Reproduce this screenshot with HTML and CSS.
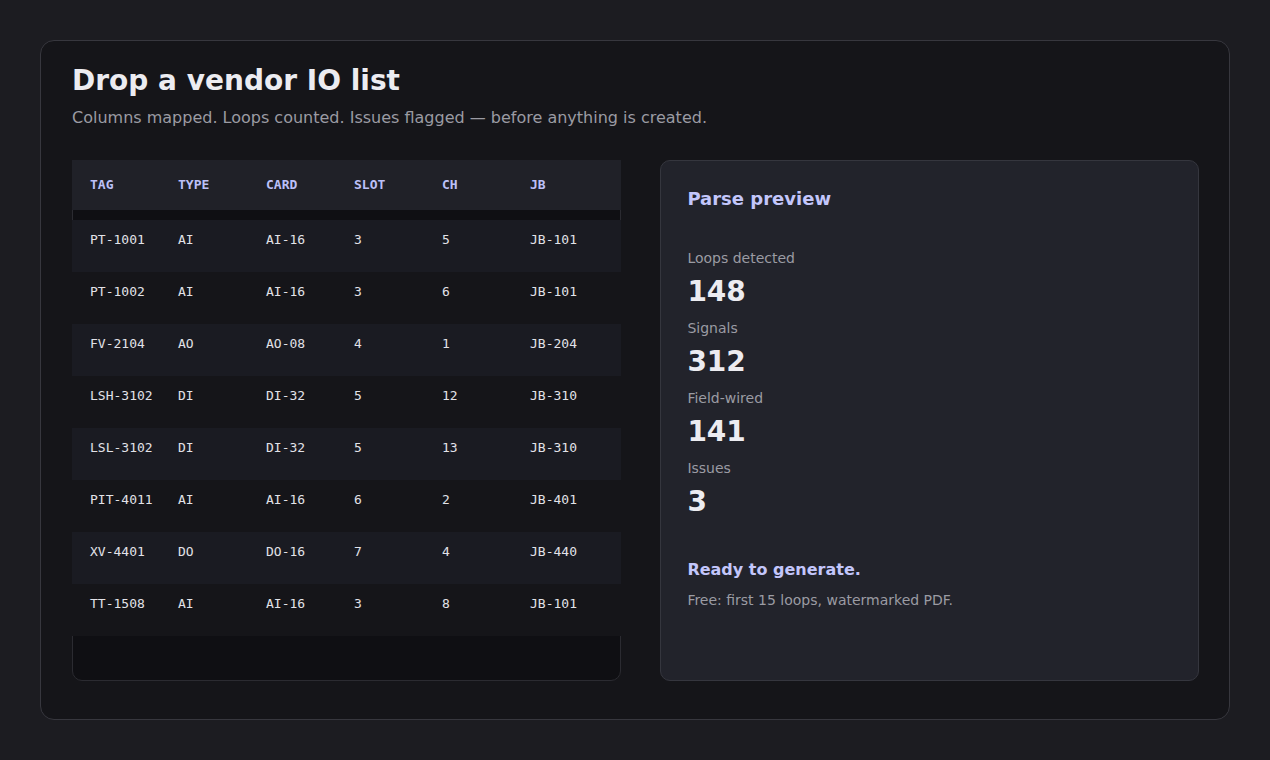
FILE: index.html
```html
<!DOCTYPE html>
<html lang="en">
<head>
  <meta charset="UTF-8" />
  <meta name="viewport" content="width=device-width, initial-scale=1.0"/>
  <title>Loop Sheets | Import</title>
  <link rel="stylesheet" href="styles.css">
</head>
<body>
  <section class="card">
    <h1>Drop a vendor IO list</h1>
    <p class="lead">Columns mapped. Loops counted. Issues flagged — before anything is created.</p>

    <div class="split">
      <div class="table-panel">
        <table class="io-table">
          <colgroup>
            <col class="c"><col class="c"><col class="c"><col class="c"><col class="c"><col>
          </colgroup>
          <thead>
            <tr><th>Tag</th><th>Type</th><th>Card</th><th>Slot</th><th>Ch</th><th>JB</th></tr>
          </thead>
          <tbody>
            <tr><td>PT-1001</td><td>AI</td><td>AI-16</td><td>3</td><td>5</td><td>JB-101</td></tr>
            <tr><td>PT-1002</td><td>AI</td><td>AI-16</td><td>3</td><td>6</td><td>JB-101</td></tr>
            <tr><td>FV-2104</td><td>AO</td><td>AO-08</td><td>4</td><td>1</td><td>JB-204</td></tr>
            <tr><td>LSH-3102</td><td>DI</td><td>DI-32</td><td>5</td><td>12</td><td>JB-310</td></tr>
            <tr><td>LSL-3102</td><td>DI</td><td>DI-32</td><td>5</td><td>13</td><td>JB-310</td></tr>
            <tr><td>PIT-4011</td><td>AI</td><td>AI-16</td><td>6</td><td>2</td><td>JB-401</td></tr>
            <tr><td>XV-4401</td><td>DO</td><td>DO-16</td><td>7</td><td>4</td><td>JB-440</td></tr>
            <tr><td>TT-1508</td><td>AI</td><td>AI-16</td><td>3</td><td>8</td><td>JB-101</td></tr>
          </tbody>
        </table>
      </div>

      <aside class="preview">
        <h2>Parse preview</h2>
        <div class="stats">
          <div class="stat"><div class="label">Loops detected</div><div class="value">148</div></div>
          <div class="stat"><div class="label">Signals</div><div class="value">312</div></div>
          <div class="stat"><div class="label">Field-wired</div><div class="value">141</div></div>
          <div class="stat"><div class="label">Issues</div><div class="value">3</div></div>
        </div>
        <div class="ready">Ready to generate.</div>
        <div class="note">Free: first 15 loops, watermarked PDF.</div>
      </aside>
    </div>
  </section>
</body>
</html>
```

FILE: styles.css
```css
* {
  box-sizing: border-box;
}

body {
  margin: 0;
  padding: 40px;
  background: #1c1c21;
  font-family: 'DejaVu Sans', sans-serif;
  color: #ececf1;
}

.card {
  height: 680px;
  background: #151519;
  border: 1px solid #37373e;
  border-radius: 14px;
  padding: 22px 30px 39px 31px;
}

h1 {
  margin: 0;
  font-size: 28px;
  line-height: 36px;
  font-weight: bold;
  color: #ececf1;
}

.lead {
  margin: 8px 0 0;
  font-size: 16px;
  line-height: 22px;
  color: #9b9ba3;
}

.split {
  display: grid;
  grid-template-columns: 1.02fr 1fr;
  gap: 39px;
  margin-top: 31px;
}

/* table */
.table-panel {
  background: #0f0f13;
  border: 1px solid #2b2b31;
  border-radius: 10px;
  padding-bottom: 44px;
}

.io-table {
  width: calc(100% + 2px);
  margin: -1px -1px 0;
  border-collapse: separate;
  border-spacing: 0;
  table-layout: fixed;
  font-family: 'DejaVu Sans Mono', monospace;
  font-size: 13px;
}

.io-table col.c {
  width: 88px;
}

.io-table th {
  text-align: left;
  padding: 15px 18px;
  line-height: 20px;
  font-weight: bold;
  text-transform: uppercase;
  color: #bcc0f8;
  background: #202128;
  background-clip: padding-box;
  border-bottom: 10px solid transparent;
}

.io-table td {
  padding: 10px 18px 22px;
  line-height: 20px;
  color: #e2e2e8;
  white-space: nowrap;
}

.io-table tbody tr:nth-child(odd) {
  background: #1a1b22;
}

.io-table tbody tr:nth-child(even) {
  background: #151519;
}

/* preview */
.preview {
  background: #22232b;
  border: 1px solid #35363e;
  border-radius: 10px;
  padding: 26px 27px 26px 26px;
}

.preview h2 {
  margin: 0;
  font-size: 18px;
  line-height: 24px;
  color: #c3c6fb;
}

.stats {
  margin-top: 37px;
}

.stat {
  margin-bottom: 10px;
}

.stat .label {
  font-size: 14px;
  line-height: 20px;
  color: #9b9ba3;
  margin-bottom: 8px;
}

.stat .value {
  font-size: 28px;
  line-height: 32px;
  font-weight: bold;
  color: #ececf1;
}

.ready {
  margin-top: 41px;
  font-size: 16px;
  line-height: 22px;
  font-weight: bold;
  color: #c3c6fb;
}

.note {
  margin-top: 9px;
  font-size: 14px;
  line-height: 20px;
  color: #9b9ba3;
}
```
